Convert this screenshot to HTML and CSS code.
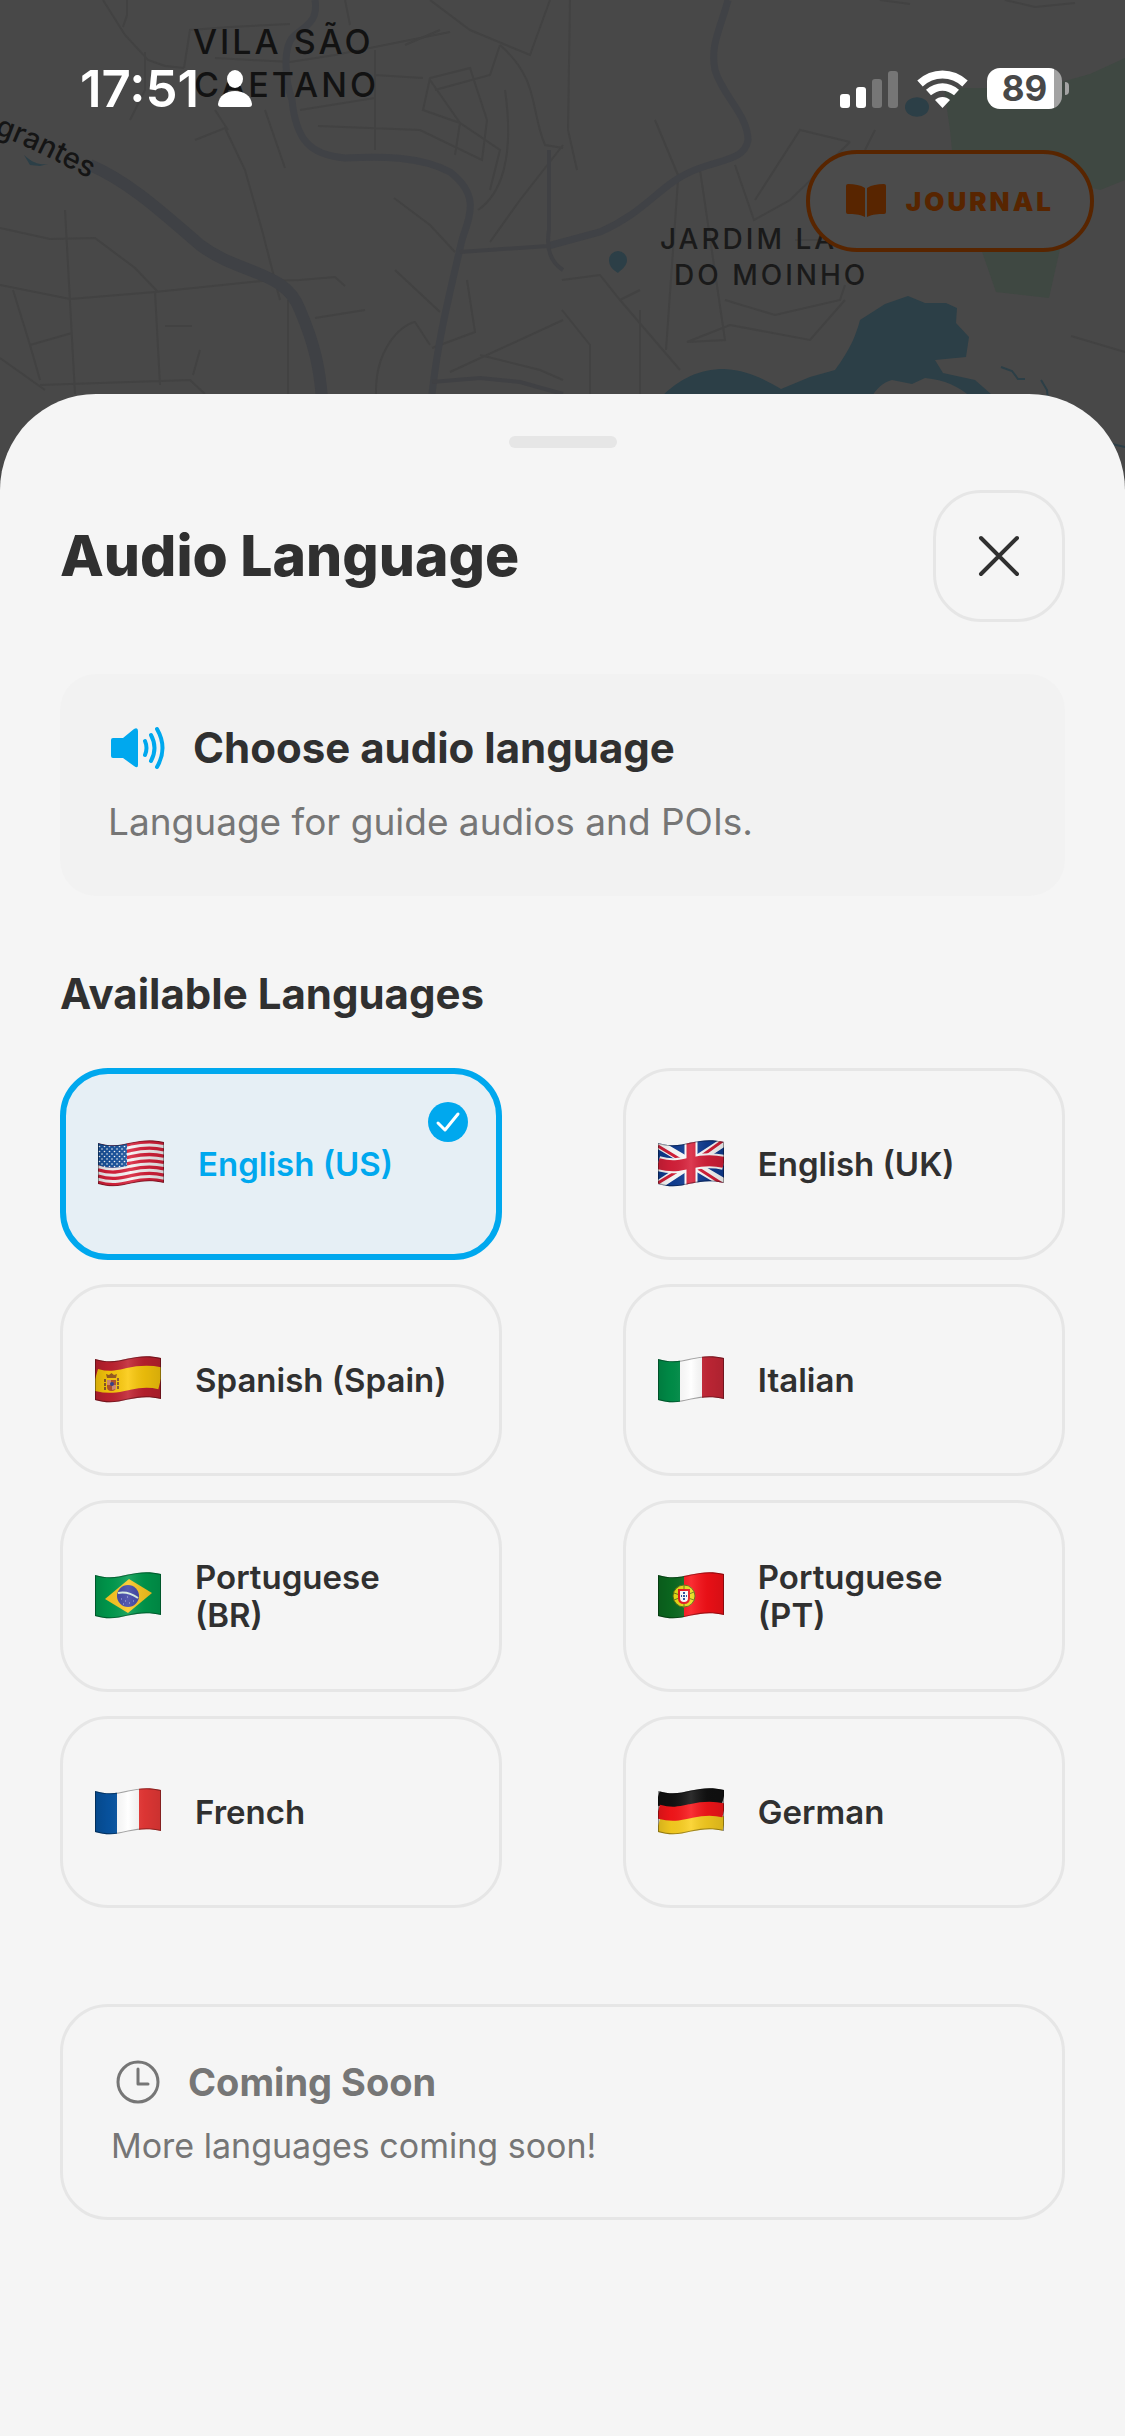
FILE: index.html
```html
<!DOCTYPE html>
<html lang="en">
<head>
    <meta charset="UTF-8">
    <meta name="viewport" content="width=device-width, initial-scale=1.0">
    <title>Audio Language</title>
    <link rel="stylesheet" href="styles.css">
</head>
<body>
    <svg class="map" viewBox="0 0 1125 500" preserveAspectRatio="xMidYMin slice" aria-hidden="true">
        <path class="park" d="M944 88H1040L1090 74 1125 58V180L1100 190 1060 180H955L950 130Z"/>
        <path class="park" d="M978 240H1062L1049 298 996 292Z"/>
        <path class="water" d="M660 398C680 378 700 369 724 369 750 370 768 382 781 389L810 377 835 370C850 350 856 335 860 320L885 304 908 296 925 303 946 303 957 308 956 323 969 337 966 357 935 360 943 373 975 380 991 394V410H660Z"/>
        <path class="land" d="M870 400C876 388 884 382 892 380L912 384 925 378C945 380 958 386 972 398V412H870Z"/>
        <path class="creek" d="M1001 367L1012 371 1018 379 1025 379M1041 380L1047 390 1048 400M1112 444L1125 447"/>
        <g class="streets">
            <path d="M103 0L125 35 148 60 165 66 184 68M127 0V15L123 27M145 52V90L130 120M184 68L190 30 230 27 290 24M215 58L290 62 335 55 450 32M195 140L225 128 245 170 262 230 280 300M215 110L228 130M265 110L285 168M0 228L50 239 95 238 135 268 158 292M0 285L70 299 155 292 262 281 300 280 335 277 345 286M65 210L75 394M13 290L30 345 40 380M30 345L72 333M0 358L45 390M155 292L160 385M40 385L190 380 205 394M165 326H192M200 350L193 375M315 318L365 310M394 198L430 225 455 252M395 270L440 312M288 300V394"/>
            <path d="M300 110L375 98V75L423 78M375 50V150M318 126L420 130 482 160 487 120 470 68 430 78 423 110 460 123 500 150 490 190M345 0L350 25M430 0L470 30 530 55 550 0M405 45L440 30M500 45C540 80 530 110 545 145L563 148M563 145L520 200 490 242M500 45L490 75 435 90M478 210C500 195 515 160 505 90M376 394C375 350 400 325 415 322L430 345M432 348L475 332 467 280M450 372L563 320M480 355L540 370 563 380M430 80L460 123 455 155"/>
            <path d="M570 0L568 130 577 170M700 170L725 340 687 342 730 325 810 340 845 300M735 165L754 220 790 200 850 142M850 142L800 130 755 200M875 130L865 150M678 180L666 350M640 310V394M725 300L775 315 840 300 845 285M562 280L600 275 620 300 680 370M562 310L590 345V394M655 120L680 180M880 0L910 4M1005 0L1035 7 1075 3M1071 336L1125 352M620 300L640 290M832 210V240H795"/>
        </g>
        <g class="roads">
            <path d="M315 0C318 20 308 25 295 35 282 45 285 80 292 100 296 140 310 155 345 158 380 156 420 156 450 172 480 195 470 215 462 240 448 300 438 340 432 394"/>
            <path d="M728 0C720 30 710 45 715 70 722 95 748 115 748 140 745 160 720 160 700 168 660 182 650 210 600 232L548 246"/>
        </g>
        <path class="side-road" d="M548 246L460 252M432 382L480 378 520 382 563 394M549 150V230C545 255 555 265 563 270"/>
        <path class="highway" d="M90 165C130 182 165 215 200 245 240 275 285 270 300 310 315 345 320 370 322 400"/>
        <path class="water" d="M905 107a11 9 0 1 1 24 0 11 9 0 1 1-24 0M609 260a9 9 0 1 1 18 0C627 266 621 270 618 273 613 270 609 266 609 260M24 155C34 164 40 165 48 164L40 166 30 165Z"/>
        <text class="place place-lg" x="193" y="54">VILA SÃO</text>
        <text class="place place-lg" x="194" y="97">CAETANO</text>
        <text class="place" x="660" y="249">JARDIM LAGO</text>
        <text class="place" x="674" y="285">DO MOINHO</text>
        <path id="street-curve" fill="none" d="M-6 134C25 145 55 160 110 190"/>
        <text class="street-name"><textPath href="#street-curve">grantes</textPath></text>
    </svg>

    <!-- shared flag pieces -->
    <svg class="defs" aria-hidden="true">
        <defs>
            <clipPath id="flag-clip"><path d="M0 3C14 7 22 5 33 2.500S54-1 66 2V43C54 40 44 41 33 43.500S14 48 0 44Z"/></clipPath>
            <path id="wave" d="M0 3C14 7 22 5 33 2.500S54-1 66 2" fill="none"/>
            <path id="flag-edge" d="M0 3C14 7 22 5 33 2.500S54-1 66 2V43C54 40 44 41 33 43.500S14 48 0 44Z" fill="none" stroke="#000" stroke-opacity="0.35" stroke-width="2"/>
            <linearGradient id="flag-shade">
                <stop offset="0" stop-color="#000" stop-opacity="0.15"/>
                <stop offset="0.2" stop-color="#000" stop-opacity="0.05"/>
                <stop offset="0.5" stop-color="#fff" stop-opacity="0.12"/>
                <stop offset="0.75" stop-color="#000" stop-opacity="0.08"/>
                <stop offset="1" stop-color="#000" stop-opacity="0.15"/>
            </linearGradient>
            <pattern id="stars" width="5" height="5" patternUnits="userSpaceOnUse">
                <circle cx="1.500" cy="1.500" r="0.800" fill="#fff"/>
                <circle cx="4" cy="4" r="0.800" fill="#fff"/>
            </pattern>
            <g id="flag-finish">
                <rect width="66" height="48" fill="url(#flag-shade)"/>
                <use href="#flag-edge"/>
            </g>
        </defs>
    </svg>

    <header class="top">
        <div class="status-bar">
            <div class="status-left">
                <span class="time">17:51</span>
                <svg width="34" height="37" viewBox="0 0 34 37" fill="#fff" aria-hidden="true">
                    <ellipse cx="17" cy="9" rx="8" ry="9"/>
                    <path d="M3 37Q0 37 0 34C1 26 8 21 17 21S33 26 34 34Q34 37 31 37Z"/>
                </svg>
            </div>
            <div class="status-right">
                <svg width="58" height="38" viewBox="0 0 58 38" fill="#fff" aria-hidden="true">
                    <rect x="0" y="24" width="10" height="14" rx="3"/>
                    <rect x="16" y="17" width="10" height="21" rx="3"/>
                    <rect x="32" y="9" width="10" height="29" rx="3" opacity="0.25"/>
                    <rect x="48" y="1" width="10" height="37" rx="3" opacity="0.25"/>
                </svg>
                <svg width="51" height="38" viewBox="0 0 51 38" fill="none" stroke="#fff" aria-hidden="true">
                    <path d="M3 13.500C16 1.500 35 1.500 48 13.500" stroke-width="8"/>
                    <path d="M11.500 22.500C20 15 31 15 39.500 22.500" stroke-width="7.500"/>
                    <path d="M25.500 38L18 30C22 26 29 26 33 30Z" fill="#fff" stroke="none"/>
                </svg>
                <div class="battery"><span class="battery-level">89</span></div>
            </div>
        </div>
        <button class="journal" type="button">
            <svg width="40" height="34" viewBox="0 0 40 34" fill="currentColor" aria-hidden="true">
                <path d="M19 4V33C13 30 8 30 2 30Q0 30 0 28V2Q0 0 2 0C9 0 14 1 19 4Z"/>
                <path d="M21 4V33C27 30 32 30 38 30Q40 30 40 28V2Q40 0 38 0C31 0 26 1 21 4Z"/>
            </svg>
            <span>JOURNAL</span>
        </button>
    </header>

    <main class="sheet">
        <div class="handle"></div>
        <div class="sheet-header">
            <h1>Audio Language</h1>
            <button class="close" type="button" aria-label="Close">
                <svg width="42" height="42" viewBox="0 0 42 42" fill="none" stroke="currentColor" stroke-width="4" stroke-linecap="round">
                    <path d="M3 3L39 39M39 3L3 39"/>
                </svg>
            </button>
        </div>

        <section class="info">
            <div class="info-title">
                <svg width="54" height="44" viewBox="0 0 54 44" fill="none" stroke="#00a8ee" stroke-width="4" stroke-linecap="round" aria-hidden="true">
                    <path d="M2 12H12L23 3Q27 1 27 5V39Q27 43 23 40L12 32H2Q0 32 0 30V14Q0 12 2 12Z" fill="#00a8ee" stroke="none"/>
                    <path d="M34 15Q37 22 34 29M40 9Q47 22 40 35M46 3Q57 22 46 41"/>
                </svg>
                <h2>Choose audio language</h2>
            </div>
            <p>Language for guide audios and POIs.</p>
        </section>

        <h2 class="section-title">Available Languages</h2>
        <div class="languages">
            <button class="language selected" type="button" aria-pressed="true">
                <svg class="flag" viewBox="0 0 66 48" aria-hidden="true">
                    <g clip-path="url(#flag-clip)">
                        <rect width="66" height="48" fill="#f6f2f4"/>
                        <g stroke="#d8203a" stroke-width="3.300">
                            <use href="#wave" y="1.500"/><use href="#wave" y="7.900"/><use href="#wave" y="14.200"/><use href="#wave" y="20.500"/><use href="#wave" y="26.800"/><use href="#wave" y="33.100"/><use href="#wave" y="39.400"/>
                        </g>
                        <path d="M0 3C12 7 22 5 29 3.500V26C20 28 10 29 0 25Z" fill="#1b55a0"/>
                        <path d="M0 4C12 8 22 6 29 5V26C20 28 10 29 0 25Z" fill="url(#stars)"/>
                        <use href="#flag-finish"/>
                    </g>
                </svg>
                <span>English (US)</span>
                <svg class="check" viewBox="0 0 40 40" fill="none" aria-hidden="true">
                    <circle cx="20" cy="20" r="20" fill="#00a8ee"/>
                    <path d="M10 21L17 28 30 12" stroke="#fff" stroke-width="3" stroke-linecap="round" stroke-linejoin="round"/>
                </svg>
            </button>
            <button class="language" type="button" aria-pressed="false">
                <svg class="flag" viewBox="0 0 66 48" aria-hidden="true">
                    <g clip-path="url(#flag-clip)">
                        <rect width="66" height="48" fill="#0f3d94"/>
                        <path d="M0 4L66 43M0 45L66 2" stroke="#fff" stroke-width="9"/>
                        <path d="M0 6L28 23M38 27L66 45M0 43L28 26M38 20L66 0" stroke="#d8203a" stroke-width="3"/>
                        <use href="#wave" y="20.500" stroke="#fff" stroke-width="15"/>
                        <path d="M33 0V48" stroke="#fff" stroke-width="13"/>
                        <use href="#wave" y="20.500" stroke="#d8203a" stroke-width="11"/>
                        <path d="M33 0V48" stroke="#d8203a" stroke-width="9"/>
                        <use href="#flag-finish"/>
                    </g>
                </svg>
                <span>English (UK)</span>
            </button>
            <button class="language" type="button" aria-pressed="false">
                <svg class="flag" viewBox="0 0 66 48" aria-hidden="true">
                    <g clip-path="url(#flag-clip)">
                        <rect width="66" height="48" fill="#c0212f"/>
                        <use href="#wave" y="20.500" stroke="#fbc90b" stroke-width="22"/>
                        <path d="M10 23V35M23 22V34" stroke="#8d5a2c" stroke-width="2" stroke-dasharray="3 1"/>
                        <path d="M12 24H21V31Q21 35 16.500 35T12 31Z" fill="#b5522d"/>
                        <path d="M12 24H16V29H12ZM17 29H21V33L17 34Z" fill="#d88f73"/>
                        <circle cx="17" cy="28" r="2" fill="#39438d"/>
                        <path d="M12 22L11 18 14 19 16.500 17 19 19 22 18 21 22Z" fill="#9a5c20"/>
                        <use href="#flag-finish"/>
                    </g>
                </svg>
                <span>Spanish (Spain)</span>
            </button>
            <button class="language" type="button" aria-pressed="false">
                <svg class="flag" viewBox="0 0 66 48" aria-hidden="true">
                    <g clip-path="url(#flag-clip)">
                        <rect width="22" height="48" fill="#00914a"/>
                        <rect x="22" width="22" height="48" fill="#fff"/>
                        <rect x="44" width="22" height="48" fill="#cb2838"/>
                        <use href="#flag-finish"/>
                    </g>
                </svg>
                <span>Italian</span>
            </button>
            <button class="language" type="button" aria-pressed="false">
                <svg class="flag" viewBox="0 0 66 48" aria-hidden="true">
                    <g clip-path="url(#flag-clip)">
                        <rect width="66" height="48" fill="#009c4e"/>
                        <path d="M10 27L34 7 57 21 33 41Z" fill="#fcc822"/>
                        <circle cx="33" cy="24" r="11" fill="#3f45a5"/>
                        <path d="M23 21Q33 19 43 26" stroke="#d9f0e4" stroke-width="2" fill="none"/>
                        <path d="M26 27H27M30 29H31M34 31H35M38 29H39M28 32H29M32 25H33" stroke="#aeb3e4"/>
                        <use href="#flag-finish"/>
                    </g>
                </svg>
                <span>Portuguese (BR)</span>
            </button>
            <button class="language" type="button" aria-pressed="false">
                <svg class="flag" viewBox="0 0 66 48" aria-hidden="true">
                    <g clip-path="url(#flag-clip)">
                        <rect width="27" height="48" fill="#0b6b20"/>
                        <rect x="26" width="40" height="48" fill="#fb1118"/>
                        <circle cx="26" cy="24" r="11" fill="#e9dd13" stroke="#5c6b10"/>
                        <path d="M16 21L36 28M16 28L36 20M26 13V36" stroke="#6a7a10"/>
                        <path d="M20 17H32V26Q32 32 26 32T20 26Z" fill="#e8131c"/>
                        <path d="M22 19H30V26Q30 30 26 30T22 26Z" fill="#fff"/>
                        <path d="M25 21H27M25 24H27M25 27H27M23 24H24M28 24H29" stroke="#274ba0" stroke-width="2"/>
                        <use href="#flag-finish"/>
                    </g>
                </svg>
                <span>Portuguese (PT)</span>
            </button>
            <button class="language" type="button" aria-pressed="false">
                <svg class="flag" viewBox="0 0 66 48" aria-hidden="true">
                    <g clip-path="url(#flag-clip)">
                        <rect width="22" height="48" fill="#0755a4"/>
                        <rect x="22" width="22" height="48" fill="#fff"/>
                        <rect x="44" width="22" height="48" fill="#ee3a38"/>
                        <use href="#flag-finish"/>
                    </g>
                </svg>
                <span>French</span>
            </button>
            <button class="language" type="button" aria-pressed="false">
                <svg class="flag" viewBox="0 0 66 48" aria-hidden="true">
                    <g clip-path="url(#flag-clip)">
                        <use href="#wave" y="6" stroke="#111" stroke-width="17"/>
                        <use href="#wave" y="35" stroke="#fbd020" stroke-width="17"/>
                        <use href="#wave" y="20.500" stroke="#f9161a" stroke-width="14"/>
                        <use href="#flag-finish"/>
                    </g>
                </svg>
                <span>German</span>
            </button>
        </div>

        <section class="soon">
            <div class="soon-title">
                <svg width="44" height="44" viewBox="0 0 44 44" fill="none" stroke="currentColor" stroke-width="3" stroke-linecap="round" stroke-linejoin="round" aria-hidden="true">
                    <circle cx="22" cy="22" r="20"/>
                    <path d="M22 9V24H32"/>
                </svg>
                <h3>Coming Soon</h3>
            </div>
            <p>More languages coming soon!</p>
        </section>
    </main>
</body>
</html>
```

FILE: styles.css
```css
* {
    margin: 0;
    padding: 0;
    box-sizing: border-box;
}
body {
    position: relative;
    min-height: 100vh;
    display: flex;
    flex-direction: column;
    font-family: Inter, "Liberation Sans", sans-serif;
    background-color: #484848;
    color: #303030;
}
svg {
    display: block;
    flex-shrink: 0;
}
button {
    font-family: inherit;
    color: inherit;
    cursor: pointer;
}
.defs {
    position: absolute;
    width: 0;
    height: 0;
}

/* map behind the sheet */
.map {
    position: absolute;
    top: 0;
    left: 0;
    width: 100%;
    height: 500px;
}
.park {
    fill: #3f4842;
}
.water {
    fill: #2c3f47;
}
.land {
    fill: #484848;
}
.creek {
    fill: none;
    stroke: #2c3f47;
    stroke-width: 2;
}
.streets {
    fill: none;
    stroke: #424242;
    stroke-width: 2;
}
.roads {
    fill: none;
    stroke: #404246;
    stroke-width: 7;
}
.side-road {
    fill: none;
    stroke: #404144;
    stroke-width: 4;
}
.highway {
    fill: none;
    stroke: #3f4145;
    stroke-width: 12;
}
.place {
    font-size: 28px;
    font-weight: 500;
    letter-spacing: 3px;
    fill: #1a1a1a;
}
.place-lg {
    font-size: 34px;
    fill: #121212;
}
.street-name {
    font-size: 29px;
    font-weight: 500;
    fill: #151515;
}

/* status bar */
.top {
    position: relative;
    height: 394px;
    padding: 68px 31px 0 80px;
    display: flex;
    flex-direction: column;
    align-items: flex-end;
    gap: 41px;
}
.status-bar {
    width: 100%;
    height: 41px;
    padding-right: 25px;
    display: flex;
    justify-content: space-between;
    align-items: center;
    color: #fff;
}
.status-left,
.status-right {
    display: flex;
    align-items: center;
    gap: 19px;
}
.time {
    font-size: 51px;
    line-height: 41px;
    font-weight: 600;
}
.battery {
    position: relative;
    width: 75px;
    height: 41px;
    margin-right: 7px;
    border-radius: 13px;
    background: linear-gradient(to right, #fff 89%, #a3a3a3 89%);
    text-align: center;
}
.battery::after {
    content: "";
    position: absolute;
    top: 14px;
    right: -7px;
    width: 4px;
    height: 13px;
    border-radius: 0 4px 4px 0;
    background-color: #a3a3a3;
}
.battery-level {
    font-size: 35px;
    line-height: 41px;
    font-weight: 700;
    color: #484848;
}
.journal {
    height: 102px;
    padding: 0 36px;
    display: flex;
    align-items: center;
    gap: 20px;
    border: 4px solid #582500;
    border-radius: 51px;
    background-color: #4b4b4b;
    color: #582500;
    font-size: 26px;
    font-weight: 900;
    letter-spacing: 3px;
}

/* bottom sheet */
.sheet {
    position: relative;
    flex: 1;
    padding: 42px 60px 60px;
    border-radius: 96px 96px 0 0;
    background-color: #f5f5f5;
}
.handle {
    width: 108px;
    height: 12px;
    margin: 0 auto 42px;
    border-radius: 6px;
    background-color: #e6e6e6;
}
.sheet-header {
    display: flex;
    justify-content: space-between;
    align-items: center;
    margin-bottom: 52px;
}
h1 {
    font-size: 57px;
    line-height: 72px;
    font-weight: 800;
}
h2 {
    font-size: 42px;
    line-height: 52px;
    font-weight: 700;
}
h3 {
    font-size: 38px;
    line-height: 48px;
    font-weight: 700;
}
.close {
    width: 132px;
    height: 132px;
    display: flex;
    justify-content: center;
    align-items: center;
    border: 3px solid #e6e6e6;
    border-radius: 48px;
    background-color: #f5f5f5;
}
.info {
    height: 222px;
    padding: 48px;
    margin-bottom: 72px;
    border-radius: 36px;
    background-color: #f2f2f2;
}
.info-title {
    display: flex;
    align-items: center;
    gap: 28px;
    padding-left: 3px;
    margin-bottom: 24px;
}
.info p {
    font-size: 37px;
    line-height: 48px;
    color: #767676;
}
.section-title {
    margin-bottom: 48px;
}
.languages {
    display: grid;
    grid-template-columns: 44% 44%;
    justify-content: space-between;
    gap: 24px 0;
    margin-bottom: 96px;
}
.language {
    position: relative;
    height: 192px;
    padding: 0 50px 0 32px;
    display: flex;
    align-items: center;
    gap: 34px;
    border: 3px solid #e6e6e6;
    border-radius: 48px;
    background-color: #f5f5f5;
    font-size: 33px;
    line-height: 38px;
    font-weight: 600;
    text-align: left;
}
.language.selected {
    border: 6px solid #00a8ee;
    background-color: #e6eff5;
    color: #00a8ee;
}
.flag {
    width: 66px;
    height: 48px;
}
.check {
    position: absolute;
    top: 28px;
    right: 28px;
    width: 40px;
    height: 40px;
}
.soon {
    height: 216px;
    padding: 51px 48px;
    border: 3px solid #e6e6e6;
    border-radius: 48px;
    color: #767676;
}
.soon-title {
    display: flex;
    align-items: center;
    gap: 28px;
    padding-left: 5px;
    margin-bottom: 18px;
}
.soon p {
    font-size: 34px;
    line-height: 44px;
}
```
